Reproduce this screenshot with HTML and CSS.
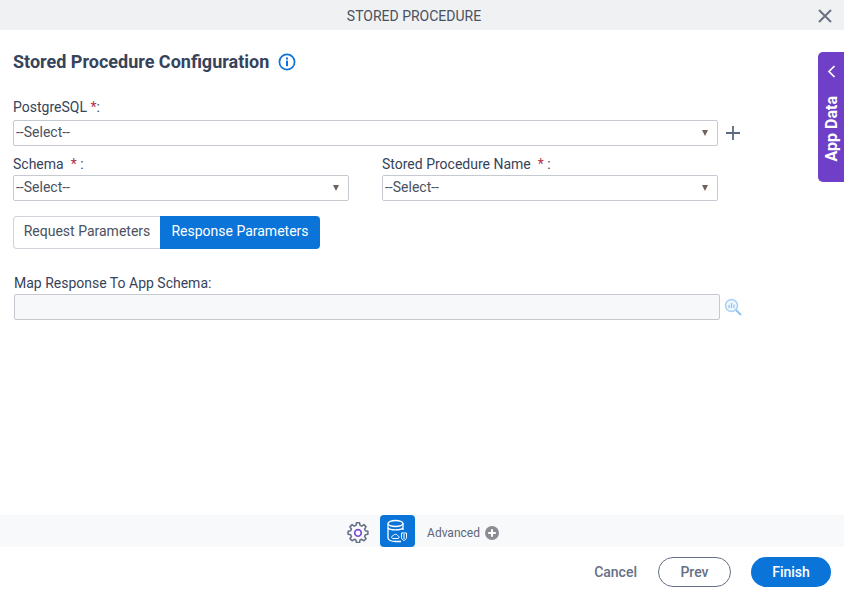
FILE: index.html
```html
<!DOCTYPE html>
<html lang="en">
  <head>
    <meta charset="UTF-8" />
    <title>Stored Procedure</title>
    <link rel="stylesheet" href="styles.css">
  </head>
  <body>
    <div class="dialog">
      <div class="header">
        <span class="header-title">STORED PROCEDURE</span>
        <svg class="close" width="14" height="14" viewBox="0 0 14 14">
          <path d="M1 1L13 13M13 1L1 13" stroke="#6b7280" stroke-width="2" fill="none" />
        </svg>
      </div>

      <div class="content">
        <h1 class="title">
          Stored Procedure Configuration
          <svg class="info" width="18" height="18" viewBox="0 0 18 18">
            <circle cx="9" cy="9" r="7.6" stroke="#0a74d8" stroke-width="1.7" fill="none" />
            <rect x="8" y="7.6" width="2" height="5.6" fill="#0a74d8" />
            <rect x="8" y="4.5" width="2" height="2" fill="#0a74d8" />
          </svg>
        </h1>

        <label class="label label-first">PostgreSQL <span class="req">*</span>:</label>
        <div class="row">
          <div class="select select-wide">--Select--<span class="arrow"></span></div>
          <svg class="plus" width="16" height="16" viewBox="0 0 16 16">
            <path d="M8 1V15M1 8H15" stroke="#5a6b80" stroke-width="1.8" fill="none" />
          </svg>
        </div>

        <div class="two-cols">
          <div class="col">
            <label class="label">Schema &nbsp;<span class="req">*</span> :</label>
            <div class="select">--Select--<span class="arrow"></span></div>
          </div>
          <div class="col">
            <label class="label">Stored Procedure Name &nbsp;<span class="req">*</span> :</label>
            <div class="select">--Select--<span class="arrow"></span></div>
          </div>
        </div>

        <div class="tabs">
          <div class="tab">Request Parameters</div>
          <div class="tab tab-active">Response Parameters</div>
        </div>

        <label class="label label-map">Map Response To App Schema:</label>
        <div class="row">
          <div class="map-input"></div>
          <svg class="search" width="18" height="18" viewBox="0 0 18 18">
            <circle cx="7.5" cy="7.5" r="6" stroke="#a9d0f5" stroke-width="1.6" fill="#eef6fe" />
            <path d="M12 12L17 17" stroke="#8fc2f2" stroke-width="2" fill="none" />
            <path d="M5 10V7M7.5 10V5M10 10V6.5" stroke="#8fc2f2" stroke-width="1.2" fill="none" />
          </svg>
        </div>
      </div>

      <div class="app-data">
        <svg width="9" height="13" viewBox="0 0 9 13">
          <path d="M7.5 1L2 6.5L7.5 12" stroke="#fff" stroke-width="1.7" fill="none" />
        </svg>
        <span class="app-data-text">App Data</span>
      </div>

      <div class="toolbar">
        <svg class="gear" width="22" height="22" viewBox="0 0 24 24">
          <path d="M10.3 2h3.4l.5 2.8 1.9.8 2.3-1.6 2.4 2.4-1.6 2.3.8 1.9 2.8.5v3.4l-2.8.5-.8 1.9 1.6 2.3-2.4 2.4-2.3-1.6-1.9.8-.5 2.8h-3.4l-.5-2.8-1.9-.8-2.3 1.6-2.4-2.4 1.6-2.3-.8-1.9-2.8-.5v-3.4l2.8-.5.8-1.900-1.600-2.300 2.400-2.400 2.300 1.600 1.900-.8z" stroke="#667085" stroke-width="1.7" stroke-linejoin="round" fill="none" />
          <circle cx="12" cy="13" r="3.6" stroke="#7b4fd6" stroke-width="1.8" fill="none" />
        </svg>
        <div class="db-btn">
          <svg width="24" height="24" viewBox="0 0 24 24">
            <ellipse cx="9.500" cy="4.500" rx="7.500" ry="3" stroke="#fff" stroke-width="1.300" fill="none" />
            <path d="M2 4.500V19C2 21 5.500 22.500 9.500 22.500H15M17 4.500V11" stroke="#fff" stroke-width="1.300" fill="none" />
            <path d="M2 9C4 11.500 15 11.500 17 9" stroke="#fff" stroke-width="1.300" fill="none" />
            <path d="M7 19.500C5 19.500 5 17 7 17C8 14.500 11.500 15 11.800 17C13.500 17 13.500 19.500 12 19.500Z" stroke="#fff" stroke-width="1" fill="none" />
            <path d="M15.500 14H20.500V18.500C20.500 20 19 21 18 21.500C17 21 15.500 20 15.500 18.500Z" stroke="#fff" stroke-width="1" fill="none" />
            <path d="M18 15V20" stroke="#fff" stroke-width="1" />
          </svg>
        </div>
        <span class="advanced">Advanced</span>
        <svg class="adv-plus" width="14" height="14" viewBox="0 0 14 14">
          <circle cx="7" cy="7" r="7" fill="#8a8d93" />
          <path d="M7 3.200V10.800M3.200 7H10.800" stroke="#fff" stroke-width="2" />
        </svg>
      </div>

      <div class="footer">
        <span class="cancel">Cancel</span>
        <button class="btn btn-prev">Prev</button>
        <button class="btn btn-finish">Finish</button>
      </div>
    </div>
  </body>
</html>
```

FILE: styles.css
```css
* {
  box-sizing: border-box;
}
body {
  margin: 0;
  font-family: Roboto, "Liberation Sans", sans-serif;
  color: #3c4858;
  background: #fff;
}
.dialog {
  position: relative;
  display: flex;
  flex-direction: column;
  width: 844px;
  height: 593px;
  overflow: hidden;
}
.header {
  display: flex;
  align-items: center;
  justify-content: center;
  position: relative;
  flex: none;
  height: 30px;
  padding: 2px 16px 0 0;
  background: #f0f1f3;
}
.header-title {
  font-size: 14px;
  font-weight: 400;
  color: #4a5160;
}
.close {
  position: absolute;
  top: 9px;
  right: 12px;
}
.content {
  flex: 1;
  padding: 20px 0 0 13px;
}
.title {
  display: flex;
  align-items: center;
  gap: 9px;
  margin: 0;
  height: 23px;
  font-size: 18px;
  font-weight: 700;
  color: #36435a;
}
.info {
  margin-top: 1px;
}
.label {
  display: block;
  height: 17px;
  font-size: 14px;
  line-height: 17px;
  color: #36435a;
}
.label-first {
  margin-top: 26px;
  margin-bottom: 4px;
}
.req {
  color: #b0304a;
}
.row {
  display: flex;
  align-items: center;
}
.select {
  position: relative;
  width: 336px;
  height: 26px;
  padding-left: 2px;
  border: 1px solid #c6cad0;
  border-radius: 2px;
  font-size: 14px;
  line-height: 23px;
  color: #4a5160;
}
.select-wide {
  width: 705px;
}
.arrow {
  position: absolute;
  top: 9px;
  right: 9px;
  border-top: 6px solid #6e625c;
  border-left: 3.500px solid transparent;
  border-right: 3.500px solid transparent;
}
.plus {
  margin-left: 7px;
}
.two-cols {
  display: flex;
  gap: 33px;
  margin-top: 10px;
}
.two-cols .label {
  margin-bottom: 2px;
}
.tabs {
  display: flex;
  margin-top: 15px;
  width: 307px;
  height: 33px;
  font-size: 14px;
}
.tab {
  width: 147px;
  border: 1px solid #d0d3d9;
  border-right: none;
  border-radius: 4px 0 0 4px;
  text-align: center;
  line-height: 29px;
  color: #4a5160;
}
.tab-active {
  width: 160px;
  border: none;
  border-radius: 0 4px 4px 0;
  background: #0a74d8;
  color: #fff;
  font-weight: 400;
  line-height: 30px;
}
.label-map {
  margin: 26px 0 2px 1px;
}
.map-input {
  width: 706px;
  height: 26px;
  margin-left: 1px;
  border: 1px solid #c6cad0;
  border-radius: 2px;
  background: #f7f8fa;
}
.search {
  margin-left: 4px;
}
.app-data {
  position: absolute;
  top: 52px;
  right: 0;
  display: flex;
  flex-direction: column;
  align-items: center;
  gap: 18px;
  width: 26px;
  height: 130px;
  padding-top: 13px;
  background: #6f3fc8;
  border-radius: 5px 0 0 5px;
}
.app-data-text {
  writing-mode: vertical-rl;
  transform: rotate(180deg);
  font-size: 16px;
  font-weight: 700;
  color: #fff;
}
.toolbar {
  display: flex;
  align-items: center;
  justify-content: center;
  flex: none;
  height: 32px;
  padding-left: 2px;
  background: #f8f9fb;
}
.gear {
  margin-top: 2px;
}
.db-btn {
  display: flex;
  align-items: center;
  justify-content: center;
  width: 35px;
  height: 32px;
  margin-left: 11px;
  background: #0a74d8;
  border-radius: 4px;
}
.advanced {
  margin: 4px 5px 0 12px;
  font-size: 12px;
  color: #5c6678;
}
.adv-plus {
  margin-top: 4px;
}
.footer {
  display: flex;
  align-items: center;
  justify-content: flex-end;
  flex: none;
  height: 46px;
  padding: 4px 13px 0 0;
}
.cancel {
  margin-right: 21px;
  font-size: 14px;
  font-weight: 500;
  color: #667085;
}
.btn {
  height: 30px;
  border-radius: 15px;
  font-family: inherit;
  font-size: 14px;
  font-weight: 500;
  cursor: pointer;
}
.btn-prev {
  width: 73px;
  margin-right: 20px;
  border: 1px solid #667085;
  background: #fff;
  color: #667085;
}
.btn-finish {
  width: 80px;
  border: none;
  background: #0a74d8;
  color: #fff;
}
```
